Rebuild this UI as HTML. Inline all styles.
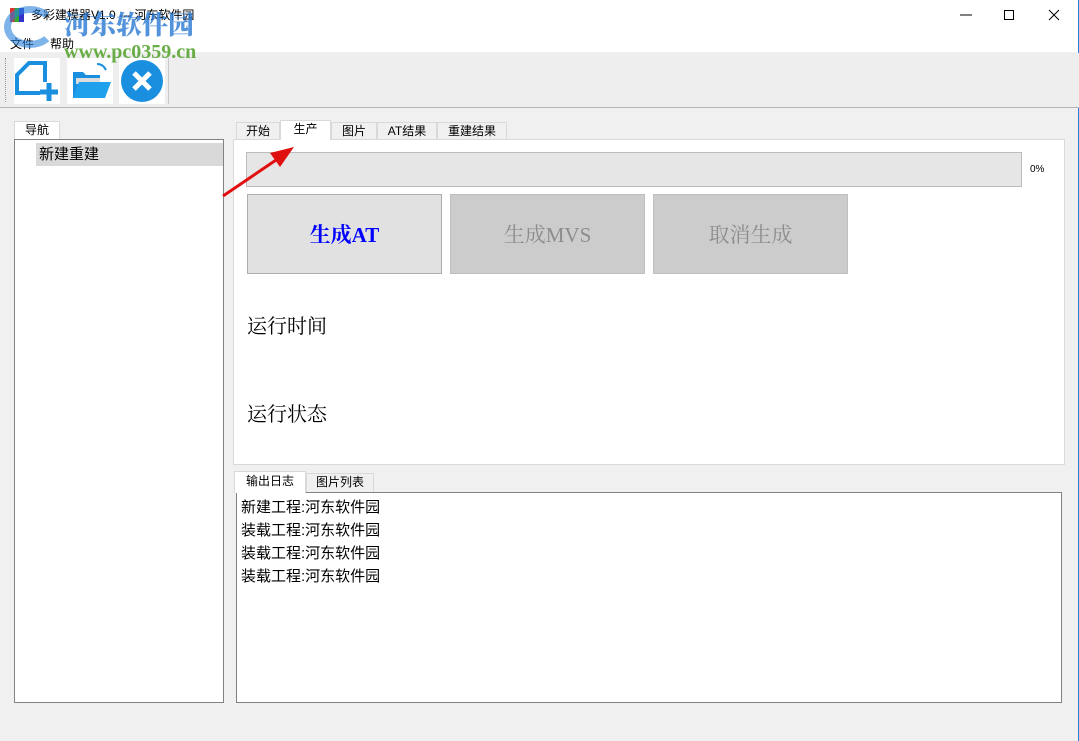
<!DOCTYPE html>
<html><head><meta charset="utf-8"><style>
*{margin:0;padding:0;box-sizing:border-box}
body{width:1079px;height:741px;overflow:hidden;background:#f0f0f0;font-family:"Liberation Sans","Microsoft YaHei","Noto Sans CJK SC",sans-serif;font-size:12px;color:#000;position:relative}
.a{position:absolute}
.tab{position:absolute;border:1px solid #d9d9d9;border-bottom:none;background:#f0f0f0;text-align:center;font-size:12px;line-height:16px}
.btn{position:absolute;top:194px;width:195px;height:80px;border:1px solid #adadad;background:#e1e1e1;font-family:"Liberation Serif","Noto Serif CJK SC",serif;font-size:21px;line-height:80px;text-align:center}
</style></head><body>
<div class="a" style="left:0;top:0;width:1079px;height:52px;background:#fff"></div>
<div class="a" style="left:1078px;top:0;width:1px;height:741px;background:#2b7fd6"></div>
<div class="a" style="left:0;top:53px;width:1079px;height:55px;background:#eeeeee;border-bottom:1px solid #b5b5b5"></div>
<div class="a" style="left:5px;top:58px;width:2px;height:44px;border-left:1px dotted #999"></div>
<div class="a" style="left:168px;top:58px;width:1px;height:46px;background:#c8c8c8"></div>
<div class="a" style="left:14px;top:58px;width:46px;height:46px;background:#fff"></div>
<svg class="a" style="left:14px;top:58px" width="46" height="46"><path d="M15 5h16v30H3V17z" fill="none" stroke="#1a8fe0" stroke-width="4"/><rect x="26" y="24" width="18" height="18" fill="#fff"/><path d="M35 25v18M26 34h18" stroke="#1a8fe0" stroke-width="5"/></svg>
<div class="a" style="left:67px;top:58px;width:46px;height:46px;background:#fff"></div>
<svg class="a" style="left:67px;top:58px" width="46" height="46"><path d="M6 40V14h10l3 3h14v23z" fill="#1a8fe0"/><path d="M9 20h24v6H9z" fill="#ddd"/><path d="M6 40l6-16h32l-6 16z" fill="#1fa0ec"/><path d="M30 6q6 0 9 6" fill="none" stroke="#1a8fe0" stroke-width="2"/></svg>
<div class="a" style="left:119px;top:58px;width:46px;height:46px;background:#fff"></div>
<svg class="a" style="left:119px;top:58px" width="46" height="46"><circle cx="23" cy="23" r="21" fill="#1a8fe0"/><path d="M15 15l16 16M31 15l-16 16" stroke="#fff" stroke-width="5"/></svg>

<div class="a" style="left:10px;top:8px;width:14px;height:14px;background:linear-gradient(90deg,#d33 33%,#3a3 33%,#3a3 66%,#33c 66%)"></div>
<div class="a" style="left:31px;top:6px;font-size:12px;color:#000">多彩建模器V1.0 --- 河东软件园</div>
<div class="a" style="left:10px;top:35px;color:#000">文件</div>
<div class="a" style="left:50px;top:35px;color:#000">帮助</div>
<div class="a" style="left:64px;top:8px;font-family:'Noto Serif CJK SC','Liberation Serif',serif;font-weight:900;font-size:26px;line-height:32px;color:rgba(40,120,210,.8)">河东软件园</div>
<div class="a" style="left:64px;top:40px;font-family:'Liberation Serif',serif;font-weight:bold;font-size:20px;line-height:24px;color:rgba(80,160,40,.85)">www.pc0359.cn</div>
<div class="a" style="left:4px;top:6px;width:52px;height:42px;border-radius:50%;border:7px solid rgba(40,130,220,.6);border-right-color:transparent"></div>

<div class="tab" style="left:14px;top:121px;width:46px;height:19px;background:#fff">导航</div>
<div class="a" style="left:14px;top:139px;width:210px;height:564px;background:#fff;border:1px solid #828282"></div>
<div class="a" style="left:36px;top:143px;width:187px;height:23px;background:#d9d9d9;font-size:15px;line-height:23px;padding-left:3px">新建重建</div>

<div class="tab" style="left:236px;top:122px;width:44px;height:18px">开始</div>
<div class="tab" style="left:280px;top:120px;width:51px;height:20px;background:#fff;z-index:2">生产</div>
<div class="tab" style="left:331px;top:122px;width:46px;height:18px">图片</div>
<div class="tab" style="left:377px;top:122px;width:60px;height:18px">AT结果</div>
<div class="tab" style="left:437px;top:122px;width:70px;height:18px">重建结果</div>
<div class="a" style="left:233px;top:139px;width:832px;height:326px;background:#fff;border:1px solid #d9d9d9"></div>
<div class="a" style="left:246px;top:152px;width:776px;height:35px;background:#e6e6e6;border:1px solid #bcbcbc"></div>
<div class="a" style="left:1030px;top:164px;font-size:10px">0%</div>
<div class="btn" style="left:247px;color:#0000ff;font-weight:bold">生成AT</div>
<div class="btn" style="left:450px;background:#cccccc;border-color:#bfbfbf;color:#8d8d8d">生成MVS</div>
<div class="btn" style="left:653px;background:#cccccc;border-color:#bfbfbf;color:#8d8d8d">取消生成</div>
<div class="a" style="left:247px;top:310px;font-size:20px;font-family:'Liberation Serif','Noto Serif CJK SC',serif">运行时间</div>
<div class="a" style="left:247px;top:398px;font-size:20px;font-family:'Liberation Serif','Noto Serif CJK SC',serif">运行状态</div>
<svg class="a" style="left:220px;top:140px" width="80" height="60"><path d="M3 56L62 16" stroke="#e01010" stroke-width="3"/><path d="M74 7L50 13l10 14z" fill="#e01010"/></svg>

<div class="tab" style="left:234px;top:471px;width:72px;height:22px;background:#fff;line-height:19px;z-index:2">输出日志</div>
<div class="tab" style="left:306px;top:473px;width:68px;height:19px">图片列表</div>
<div class="a" style="left:236px;top:492px;width:826px;height:211px;background:#fff;border:1px solid #828282;font-size:15px;line-height:23px;padding:3px 4px">新建工程:河东软件园<br>装载工程:河东软件园<br>装载工程:河东软件园<br>装载工程:河东软件园</div>

<svg class="a" style="left:950px;top:8px" width="120" height="16"><path d="M10 7h12" stroke="#000"/><rect x="54.5" y="2.5" width="9" height="9" fill="none" stroke="#000"/><path d="M99 2l10 10M109 2l-10 10" stroke="#000"/></svg>
</body></html>
